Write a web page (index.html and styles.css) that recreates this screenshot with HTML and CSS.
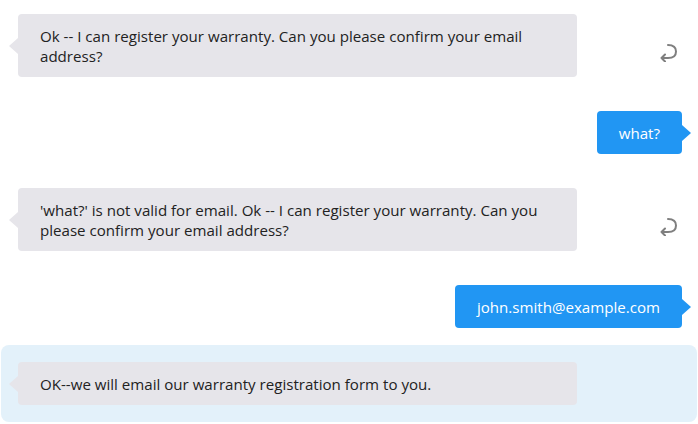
FILE: index.html
```html
<!DOCTYPE html>
<html>
<head>
<meta charset="utf-8">
<link rel="stylesheet" href="styles.css">
</head>
<body>
<div class="chat">
  <div class="row bot first">
    <div class="bubble bot-bubble">Ok -- I can register your warranty. Can you please confirm your email address?</div>
    <div class="spacer"></div>
    <svg class="reply" width="20" height="20" viewBox="0 0 20 20"><path d="M9 3 C14 3 17 5.5 17 9.5 C17 13.5 14 16 9 16 L2.5 16 M6 12.5 L2.5 16 L6 19.5" fill="none" stroke="#7f7f7f" stroke-width="2" stroke-linecap="round" stroke-linejoin="round"/></svg>
  </div>
  <div class="row user">
    <div class="bubble user-bubble">what?</div>
  </div>
  <div class="row bot">
    <div class="bubble bot-bubble">'what?' is not valid for email. Ok -- I can register your warranty. Can you please confirm your email address?</div>
    <div class="spacer"></div>
    <svg class="reply" width="20" height="20" viewBox="0 0 20 20"><path d="M9 3 C14 3 17 5.5 17 9.5 C17 13.5 14 16 9 16 L2.5 16 M6 12.5 L2.5 16 L6 19.5" fill="none" stroke="#7f7f7f" stroke-width="2" stroke-linecap="round" stroke-linejoin="round"/></svg>
  </div>
  <div class="row user">
    <div class="bubble user-bubble">john.smith@example.com</div>
  </div>
  <div class="row bot selected">
    <div class="bubble bot-bubble">OK--we will email our warranty registration form to you.</div>
  </div>
</div>
</body>
</html>
```

FILE: styles.css
```css
html, body {
  margin: 0;
  padding: 0;
  background: #ffffff;
}
body {
  width: 698px;
  height: 424px;
  overflow: hidden;
  font-family: "Open Sans", "Noto Sans", sans-serif;
  font-size: 15.1px;
  color: #222222;
}
.chat {
  display: flex;
  flex-direction: column;
}
.row {
  display: flex;
  align-items: center;
  padding: 17px 16px 17px 18px;
}
.row.first {
  padding-top: 14px;
}
.row.user {
  justify-content: flex-end;
}
.row.selected {
  margin: 0 1px;
  padding-left: 17px;
  background: #e3f1fa;
  border-radius: 8px;
}
.bubble {
  position: relative;
  box-sizing: border-box;
  line-height: 20px;
  padding: 11.5px 22px;
  border-radius: 4px;
}
.bot-bubble {
  width: 559px;
  background: #e6e5ea;
}
.bot-bubble::before {
  content: "";
  position: absolute;
  left: -9px;
  top: 50%;
  margin-top: -8px;
  border-top: 8px solid transparent;
  border-bottom: 8px solid transparent;
  border-right: 9px solid #e6e5ea;
}
.user-bubble {
  background: #2196f3;
  color: #ffffff;
}
.user-bubble::after {
  content: "";
  position: absolute;
  right: -9px;
  top: 50%;
  margin-top: -8px;
  border-top: 8px solid transparent;
  border-bottom: 8px solid transparent;
  border-left: 9px solid #2196f3;
}
.spacer {
  flex: 1;
}
.reply {
  margin-top: 12px;
  margin-right: 3px;
}
```
